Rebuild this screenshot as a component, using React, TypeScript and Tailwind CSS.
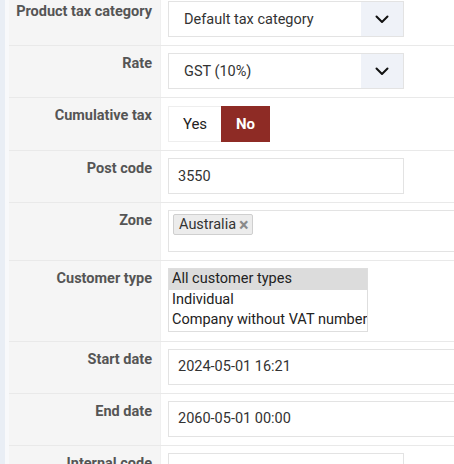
import React from "react";

const font = { fontFamily: 'Roboto, "Liberation Sans", Arial, sans-serif' };

function Chevron() {
  return (
    <svg width="14" height="9" viewBox="0 0 14 9" fill="none">
      <path d="M1.5 1.5 L7 7 L12.5 1.5" stroke="#111" strokeWidth="2" strokeLinecap="round" strokeLinejoin="round" />
    </svg>
  );
}

function Row({
  label,
  children,
  pt = "pt-[7px]",
  pb = "pb-[8px]",
}: {
  label: string;
  children: React.ReactNode;
  pt?: string;
  pb?: string;
}) {
  return (
    <div className="flex border-b border-[#e9e9e9]">
      <div className="w-[151px] shrink-0 bg-[#f5f5f5] pr-[8px] pt-[8px] text-right text-[14.5px] font-bold leading-[20px] text-[#555]">
        {label}
      </div>
      <div className={`flex-1 pl-[7px] ${pt} ${pb} border-l border-[#f0f0f0]`}>{children}</div>
    </div>
  );
}

function Select({ value }: { value: string }) {
  return (
    <div className="flex h-[36px] w-[236px] border border-[#e3e3e3] bg-white">
      <div className="flex flex-1 items-center pl-[15px] pt-[1px] text-[14.5px] text-[#333]">{value}</div>
      <div className="flex w-[42px] items-center justify-center bg-[#eff2f8]">
        <Chevron />
      </div>
    </div>
  );
}

function Input({ value, wide }: { value: string; wide?: boolean }) {
  return (
    <div
      className={`flex h-[36px] items-center border border-[#e3e3e3] bg-white pl-[9px] pt-[1px] text-[14.5px] text-[#333] ${
        wide ? "w-[320px]" : "w-[236px]"
      }`}
    >
      {value}
    </div>
  );
}

export default function App() {
  return (
    <div className="flex h-[464px] w-[454px] overflow-hidden bg-white" style={font}>
      <div className="w-[5px] shrink-0 bg-[#e9eef5]" />
      <div className="w-[4px] shrink-0 bg-[#f8f9fb]" />
      <div className="mt-[-6px] flex-1">
        <Row label="Product tax category">
          <Select value="Default tax category" />
        </Row>
        <Row label="Rate">
          <Select value="GST (10%)" />
        </Row>
        <Row label="Cumulative tax" pt="pt-[8px]">
          <div className="flex h-[36px]">
            <div className="flex w-[53px] items-center justify-center border border-r-0 border-[#eeeeee] bg-white text-[15px] text-[#222]">
              Yes
            </div>
            <div className="flex w-[49px] items-center justify-center bg-[#8e2b25] text-[15px] font-bold text-white">
              No
            </div>
          </div>
        </Row>
        <Row label="Post code">
          <Input value="3550" />
        </Row>
        <Row label="Zone">
          <div className="h-[42px] w-[320px] border border-[#e3e3e3] bg-white pl-[4px] pt-[1px]">
            <span className="inline-flex h-[21px] items-center gap-[3px] rounded-[2px] border border-[#cfcfcf] bg-[#ececec] pl-[5px] pr-[3px] text-[14.5px] text-[#333]">
              Australia
              <span className="text-[18px] font-bold leading-none text-[#8a8a8a]">×</span>
            </span>
          </div>
        </Row>
        <Row label="Customer type" pb="pb-[9px]">
          <div className="w-[200px] overflow-hidden whitespace-nowrap border border-[#dedede] bg-white text-[14.5px] leading-[20.5px] text-[#222]">
            <div className="bg-[#dcdcdc] pl-[3px]">All customer types</div>
            <div className="pl-[3px]">Individual</div>
            <div className="pl-[3px]">Company without VAT number</div>
          </div>
        </Row>
        <Row label="Start date">
          <Input value="2024-05-01 16:21" wide />
        </Row>
        <Row label="End date">
          <Input value="2060-05-01 00:00" wide />
        </Row>
        <Row label="Internal code">
          <Input value="" />
        </Row>
      </div>
    </div>
  );
}
